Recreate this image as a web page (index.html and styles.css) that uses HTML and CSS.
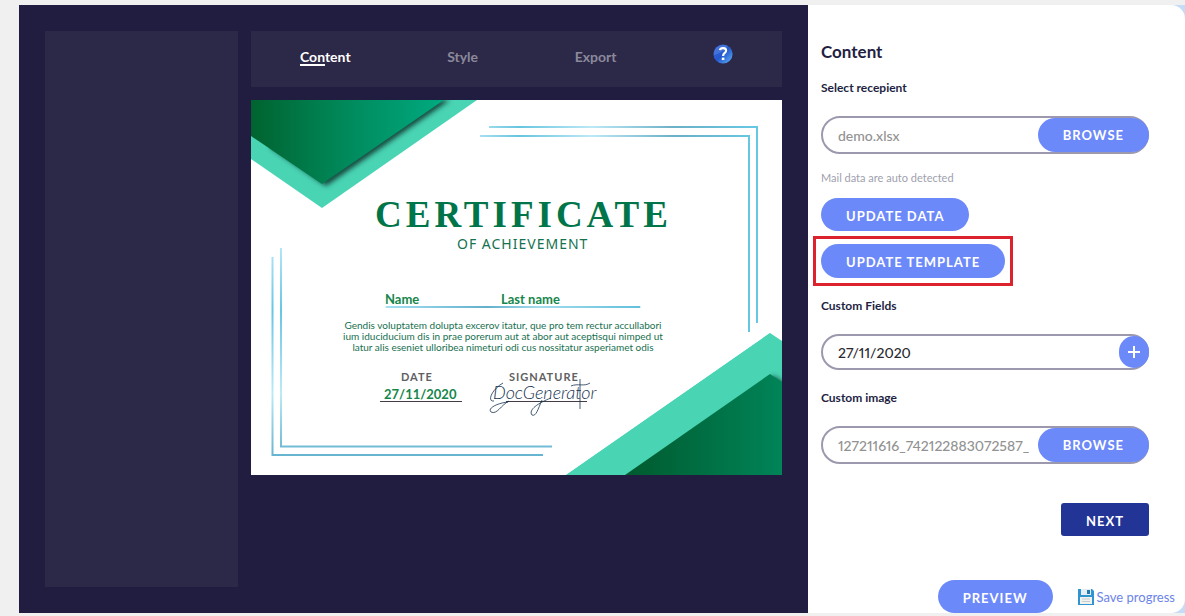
FILE: index.html
```html
<!DOCTYPE html>
<html lang="en">
<head>
<meta charset="utf-8">
<title>DocGenerator</title>
<link rel="stylesheet" href="styles.css">
</head>
<body>
<div class="app">
  <main class="workspace">
    <aside class="pages"></aside>
    <div class="editor">
      <nav class="tabs">
        <a class="tab tab-active" href="#content">Content</a>
        <a class="tab" href="#style">Style</a>
        <a class="tab" href="#export">Export</a>
        <a class="help" href="#help" aria-label="Help">
          <svg width="20" height="20" viewBox="0 0 20 20" aria-hidden="true">
            <defs><linearGradient id="hg" x1="0" y1="0" x2="1" y2="1"><stop offset="0" stop-color="#3a6ad8"/><stop offset=".5" stop-color="#2458cb"/><stop offset="1" stop-color="#62b5fa"/></linearGradient></defs>
            <circle cx="10" cy="10" r="9.6" fill="url(#hg)"/>
            <path d="M1 11C5 10 11 8 15 2A9.5 9.5 0 0 0 1 11Z" fill="#6d98ea" opacity=".35"/>
            <path d="M7 6.2C7.4 3.4 13.2 3.4 13.1 6.7C13 9 10.1 8.9 10.1 11.9" fill="none" stroke="#fff" stroke-width="2.2"/>
            <path d="M8.8 13.6h2.6v2.4H8.8z" fill="#fff"/>
          </svg>
        </a>
      </nav>
      <svg class="certificate" viewBox="0 0 531 375" role="img" aria-label="Certificate preview">
        <defs>
          <linearGradient id="g1"><stop offset="0" stop-color="#00632f"/><stop offset=".5" stop-color="#008a5c"/><stop offset="1" stop-color="#00aa80"/></linearGradient>
          <linearGradient id="g2"><stop offset="0" stop-color="#005a2e"/><stop offset="1" stop-color="#008458"/></linearGradient>
          <linearGradient id="h1" gradientUnits="userSpaceOnUse" x1="229" y1="0" x2="508" y2="0"><stop offset="0" stop-color="#a9dff0"/><stop offset=".14" stop-color="#67c5df"/><stop offset=".4" stop-color="#bde8f6"/><stop offset=".7" stop-color="#6bb0c6"/><stop offset="1" stop-color="#66c9e6"/></linearGradient>
          <linearGradient id="h2" gradientUnits="userSpaceOnUse" x1="0" y1="148" x2="0" y2="356"><stop offset="0" stop-color="#b5e5f7"/><stop offset=".3" stop-color="#67c5e5"/><stop offset=".7" stop-color="#bdeaf6"/><stop offset="1" stop-color="#66b4d0"/></linearGradient>
          <linearGradient id="h3" gradientUnits="userSpaceOnUse" x1="135" y1="0" x2="389" y2="0"><stop offset="0" stop-color="#a4e0f4"/><stop offset=".4" stop-color="#62b0cc"/><stop offset=".6" stop-color="#a4dcec"/><stop offset="1" stop-color="#62c0dd"/></linearGradient>
          <filter id="soft"><feGaussianBlur stdDeviation="2.5"/></filter>
          <clipPath id="top"><path d="M0 0H226L71 108L0 59Z"/></clipPath>
          <clipPath id="bottom"><path d="M315 375L519 233L531 241V375Z"/></clipPath>
        </defs>
        <path d="M0 0H531V375H0Z" fill="#fff"/>
        <path d="M0 0H226L71 108L0 59Z" fill="#49d4b4"/>
        <g clip-path="url(#top)"><path d="M20 0H199L75 86L20 48Z" fill="#17493c" filter="url(#soft)"/></g>
        <path d="M0 0H193L71 84L0 36Z" fill="url(#g1)"/>
        <path d="M315 375L519 233L531 241V375Z" fill="#49d4b4"/>
        <g clip-path="url(#bottom)"><path d="M400 375L523 276L540 288V375Z" fill="#17493c" filter="url(#soft)"/><path d="M315 375L519 233V274L374 375Z" fill="#49d4b4"/></g>
        <path d="M374 375L519 274L531 282V375Z" fill="url(#g2)"/>
        <g fill="none" stroke-width="2">
          <path d="M238 27H506V223M229 36H498V232" stroke="url(#h1)"/>
          <path d="M30 148V346.500H301M21.500 157V355H292" stroke="url(#h2)"/>
          <path d="M135 206.500H389V207.500H135Z" fill="url(#h3)" stroke="url(#h3)" stroke-width="1"/>
        </g>
        <text class="cert-title" x="124" y="127">CERTIFICATE</text>
        <text class="cert-sub" x="206" y="149">OF ACHIEVEMENT</text>
        <text class="cert-value" x="134" y="204">Name</text>
        <text class="cert-value" x="250" y="204">Last name</text>
        <g class="cert-body">
          <text x="252" y="229">Gendis voluptatem dolupta excerov itatur, que pro tem rectur accullabori</text>
          <text x="252" y="240">ium iduciducium dis in prae porerum aut at abor aut aceptisqui nimped ut</text>
          <text x="252" y="251">latur alis eseniet ulloribea nimeturi odi cus nossitatur asperiamet odis</text>
        </g>
        <text class="cert-caption" x="150" y="281">DATE</text>
        <text class="cert-caption" x="258" y="281">SIGNATURE</text>
        <text class="cert-value" x="133" y="299">27/11/2020</text>
        <path d="M129 301.500H211M255 301.500H336" stroke="#453c48" fill="none"/>
        <text class="cert-signature" x="242" y="299">DocGenerator</text>
        <path d="M252 283C240 290 236 302 243 301M258 301C250 305 246 315 240 312C236 308 247 303 257 302M291 300C287 309 285 317 281 315C277 310 287 303 300 298M320 286C327 283 333 287 339 283M329 279V309" fill="none" stroke="#173450" stroke-width=".8"/>
      </svg>
    </div>
  </main>

  <div class="side">
    <form class="panel">
      <h1 class="heading">Content</h1>
      <label class="label" for="recipient">Select recepient</label>
      <div class="field">
        <input class="input" id="recipient" type="text" value="demo.xlsx">
        <button class="btn btn-browse" type="button">BROWSE</button>
      </div>
      <p class="hint">Mail data are auto detected</p>
      <div class="actions">
        <button class="btn" type="button">UPDATE DATA</button>
        <div class="highlight"><button class="btn" type="button">UPDATE TEMPLATE</button></div>
      </div>
      <label class="label" for="custom">Custom Fields</label>
      <div class="field field-short">
        <input class="input input-dark" id="custom" type="text" value="27/11/2020">
        <button class="btn-add" type="button" aria-label="Add field">
          <svg width="12" height="12" viewBox="0 0 12 12" aria-hidden="true"><path d="M6 0V12M0 6H12" stroke="#fff" stroke-width="2"/></svg>
        </button>
      </div>
      <label class="label" for="image">Custom image</label>
      <div class="field">
        <input class="input" id="image" type="text" value="127211616_742122883072587_4">
        <button class="btn btn-browse" type="button">BROWSE</button>
      </div>
      <button class="btn btn-next" type="button">NEXT</button>
      <div class="footer">
        <button class="btn" type="button">PREVIEW</button>
        <a class="save" href="#save">
          <svg width="16" height="16" viewBox="0 0 16 16" aria-hidden="true">
            <path d="M0 0H14L16 2V16H0Z" fill="#2f94cf"/>
            <path d="M3 0H13V6H3Z" fill="#e4eef4"/><path d="M9 1H12V5H9Z" fill="#2478ad"/>
            <path d="M2 8H14V15H2Z" fill="#f1f1ee"/><path d="M4 10H12M4 12.500H12" stroke="#c5cdd0"/>
          </svg>
          <span>Save progress</span>
        </a>
      </div>
    </form>
  </div>
</div>
</body>
</html>
```
FILE: styles.css
```css
* { box-sizing: border-box; }

body {
  margin: 0;
  background: #f0f0f0;
  font-family: Lato, "Open Sans", sans-serif;
  color: #231f43;
}

.app {
  display: grid;
  grid-template-columns: minmax(0, 789fr) minmax(0, 377fr);
  padding: 5px 0 3px 19px;
}

.workspace {
  display: grid;
  grid-template-columns: minmax(0, 193fr) minmax(0, 531fr);
  gap: 13px;
  padding: 26px;
  background: #211d40;
}

.pages, .tabs { background: #2c2848; }

.editor {
  display: flex;
  flex-direction: column;
  gap: 13px;
}

.tabs {
  display: flex;
  justify-content: space-between;
  align-items: flex-start;
  height: 56px;
  padding: 13px 49px;
}

.tab {
  margin-top: 4px;
  font-size: 14px;
  line-height: 18px;
  font-weight: 700;
  color: #8b899b;
  text-decoration: none;
}

.tab-active { color: #fff; }

.tab-active::after {
  content: "";
  display: block;
  width: 50%;
  height: 2px;
  margin-top: -2px;
  background: #fff;
}

.help svg, .certificate { display: block; }

.certificate { width: 100%; height: auto; }

.cert-title {
  font: 700 37px "Liberation Serif", serif;
  letter-spacing: 4px;
  fill: #007549;
}

.cert-sub {
  font: 400 14px "Noto Sans", sans-serif;
  letter-spacing: 1px;
  fill: #13724f;
}

.cert-value {
  font: 700 13px Lato, sans-serif;
  fill: #16864b;
}

.cert-body {
  font: 400 10px Lato, sans-serif;
  fill: #17704f;
  text-anchor: middle;
}

.cert-caption {
  font: 700 11px Lato, sans-serif;
  letter-spacing: 1px;
  fill: #606062;
}

.cert-signature {
  font: italic 300 18px Lato, cursive;
  fill: #173450;
}

.side { background: #c6dbf5; }

.panel {
  display: flex;
  flex-direction: column;
  align-items: flex-start;
  height: 100%;
  padding: 37px 36px 0 13px;
  background: #fff;
  border-radius: 0 14px 14px 0;
}

.heading {
  margin: 0 0 18px;
  font-size: 17px;
  line-height: 20px;
}

.label {
  margin-bottom: 20px;
  font-size: 12px;
  line-height: 16px;
  font-weight: 700;
}

.field {
  display: flex;
  width: 100%;
  height: 38px;
  border: 2px solid #9c99ae;
  border-radius: 19px;
}

.field-short {
  height: 36px;
  margin-bottom: 20px;
}

.input {
  flex: 1;
  min-width: 0;
  margin: 0 9px 0 15px;
  padding: 0;
  border: 0;
  outline: 0;
  background: transparent;
  font: 500 14px Lato, sans-serif;
  font-feature-settings: "pnum";
  color: #929292;
}

.input-dark { color: #29292f; }

.btn {
  display: block;
  height: 33px;
  padding: 2px 25px 0;
  border: 0;
  border-radius: 17px;
  background: #6c89fa;
  color: #fff;
  font: 700 13px Lato, sans-serif;
  letter-spacing: 1px;
  white-space: nowrap;
}

.btn-browse {
  height: 34px;
  margin-right: -2px;
  padding-top: 0;
}

.btn-add {
  display: grid;
  place-items: center;
  width: 30px;
  height: 32px;
  margin-right: -2px;
  padding: 0;
  border: 0;
  border-radius: 15px;
  background: #6c89fa;
}

.hint {
  margin: 16px 0 12px;
  font-size: 11px;
  line-height: 16px;
  color: #a09fae;
}

.actions {
  display: flex;
  flex-direction: column;
  align-items: flex-start;
  gap: 13px;
  margin-bottom: 20px;
}

.highlight {
  outline: 3px solid #dc232d;
  outline-offset: 5px;
}

.highlight .btn { height: 34px; }

.btn-next {
  align-self: flex-end;
  margin: 39px 0 44px;
  border-radius: 3px;
  background: #233497;
}

.footer {
  display: flex;
  align-self: flex-end;
  align-items: center;
  gap: 25px;
  margin-right: -26px;
}

.save {
  display: flex;
  align-items: center;
  gap: 3px;
  font-size: 13px;
  color: #6c84e8;
  text-decoration: none;
}
```
